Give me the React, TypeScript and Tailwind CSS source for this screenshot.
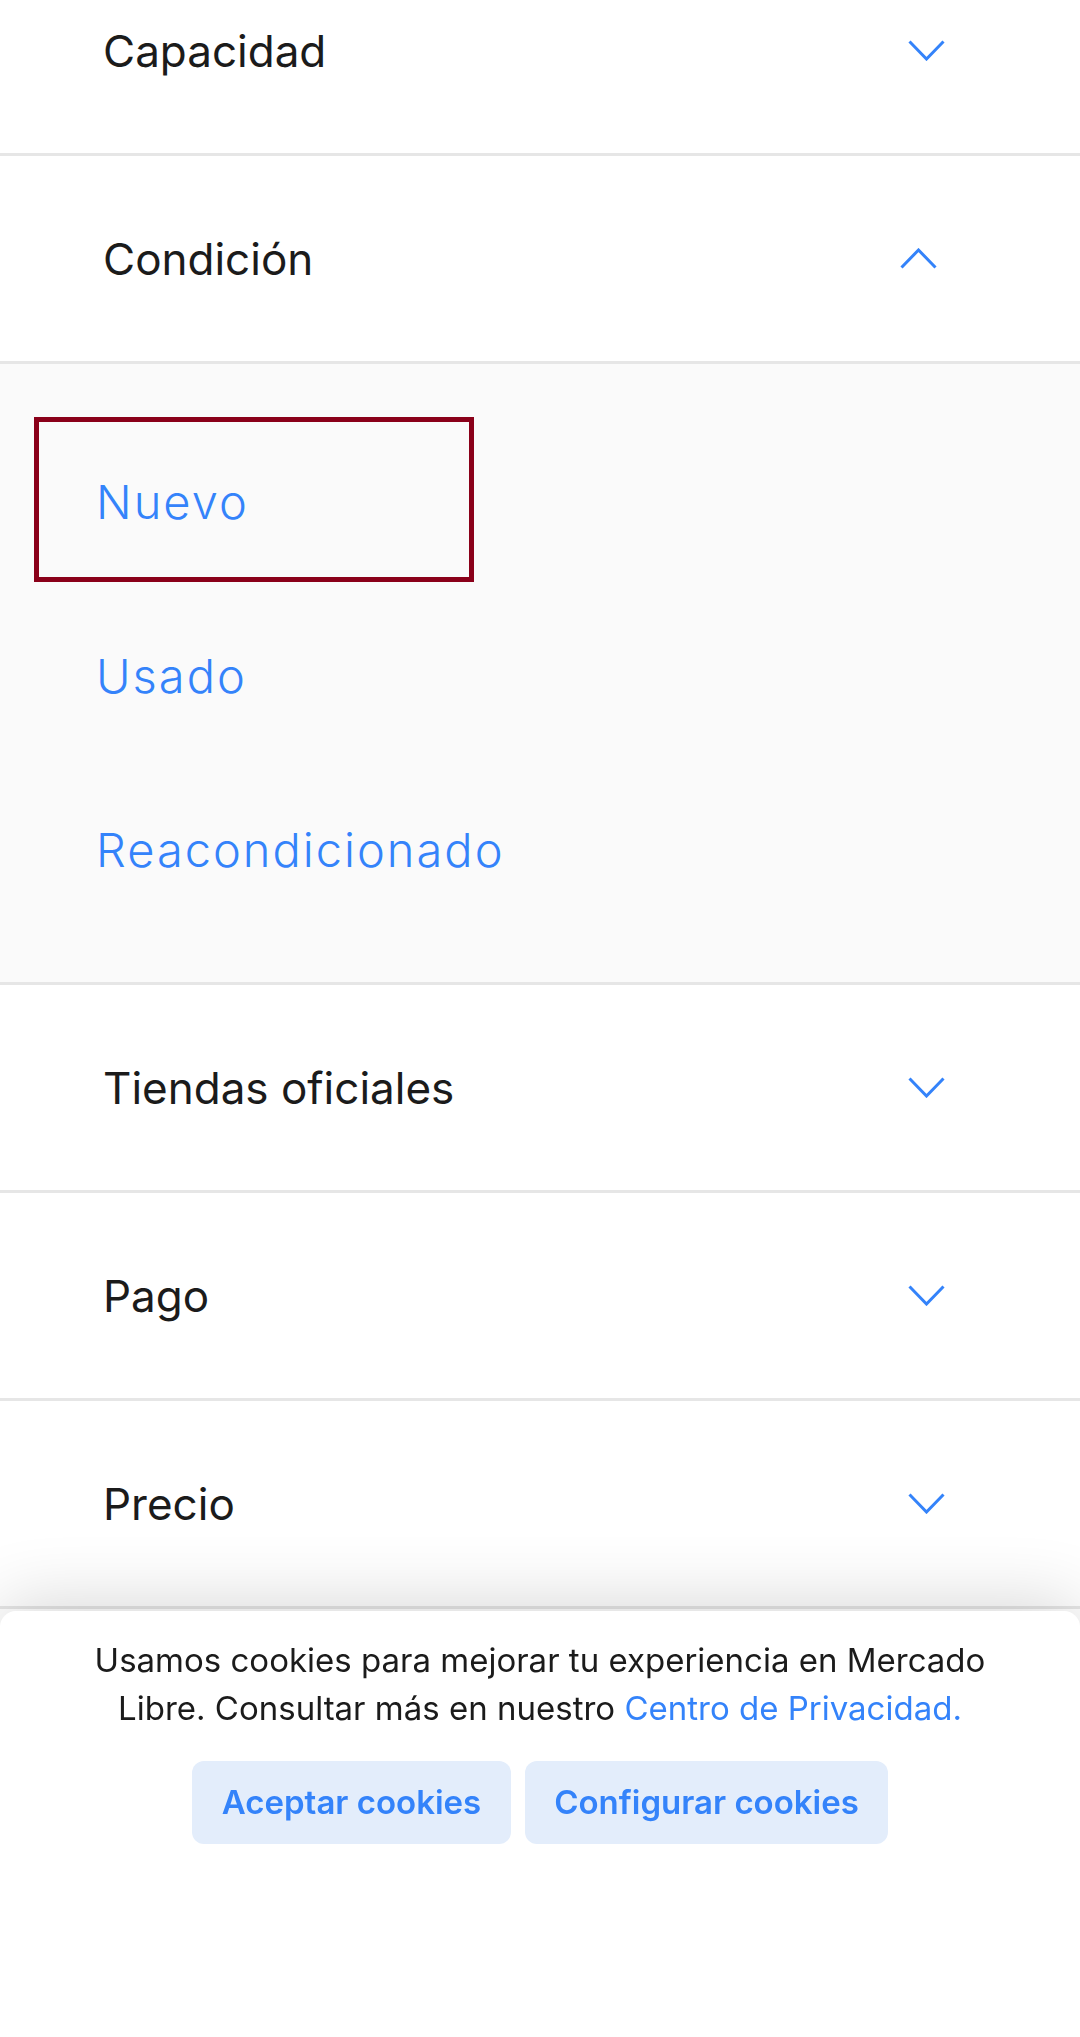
import type { ReactNode } from 'react'

const FONT = { fontFamily: 'Inter, "Noto Sans", sans-serif' }

function Chevron({ up = false }: { up?: boolean }) {
  return (
    <svg width="37" height="21" viewBox="0 0 37 21" fill="none" className="shrink-0">
      <path
        d={up ? 'M1.5 19.5 L18.5 2 L35.5 19.5' : 'M1.5 1.5 L18.5 19 L35.5 1.5'}
        stroke="#3483fa"
        strokeWidth="3"
      />
    </svg>
  )
}

function FilterRow({ label, open = false }: { label: string; open?: boolean }) {
  return (
    <div
      className={`flex h-[208px] items-center justify-between border-b-[3px] border-[#e6e6e6] bg-white pl-[103px] ${
        open ? 'pr-[143px]' : 'pr-[135px]'
      }`}
    >
      <span className="text-[44px] leading-none text-[#1b1b1b]">{label}</span>
      <Chevron up={open} />
    </div>
  )
}

function Option({ children, focused = false }: { children: ReactNode; focused?: boolean }) {
  return (
    <div className="relative flex h-[174px] items-center pl-[96px]">
      {focused && (
        <span className="absolute left-[34px] top-[3px] h-[165px] w-[440px] border-[5px] border-[#8a0019]" />
      )}
      <span className="text-[47px] font-light leading-none tracking-[2px] text-[#3483fa]">{children}</span>
    </div>
  )
}

export default function App() {
  return (
    <div className="relative h-[2037px] w-[1080px] overflow-hidden bg-white" style={FONT}>
      <div className="-mt-[52px]">
        <FilterRow label="Capacidad" />
        <FilterRow label="Condición" open />
        <div className="border-b-[3px] border-[#e6e6e6] bg-[#fafafa] pb-[46px] pt-[50px]">
          <Option focused>Nuevo</Option>
          <Option>Usado</Option>
          <Option>Reacondicionado</Option>
        </div>
        <FilterRow label="Tiendas oficiales" />
        <FilterRow label="Pago" />
        <FilterRow label="Precio" />
        <div className="h-[600px] bg-white" />
      </div>

      <div className="fixed bottom-0 left-0 right-0 h-[426px] rounded-t-[16px] bg-white px-[60px] pt-[25px] shadow-[0_-8px_70px_rgba(0,0,0,0.16)]">
        <p className="text-center text-[33px] leading-[48px] text-[#1b1b1b]">
          Usamos cookies para mejorar tu experiencia en Mercado Libre. Consultar más en nuestro{' '}
          <a className="text-[#3483fa]">Centro de Privacidad.</a>
        </p>
        <div className="mt-[29px] flex justify-center gap-[14px]">
          <button className="h-[83px] w-[319px] rounded-[12px] bg-[#e3edfb] text-[33px] font-semibold text-[#3483fa]">
            Aceptar cookies
          </button>
          <button className="h-[83px] w-[363px] rounded-[12px] bg-[#e3edfb] text-[33px] font-semibold text-[#3483fa]">
            Configurar cookies
          </button>
        </div>
      </div>
    </div>
  )
}
